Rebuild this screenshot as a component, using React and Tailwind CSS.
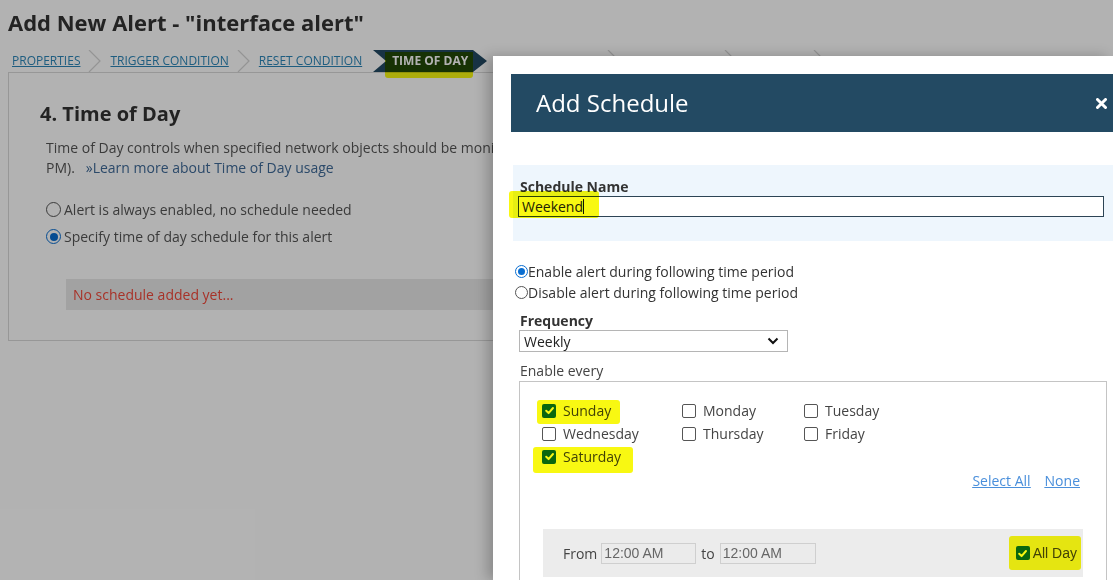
import React from 'react';

const Radio = ({ checked, size = 13 }) => (
  checked ? (
    <span className={`flex shrink-0 items-center justify-center rounded-full border-[1.5px] border-[#0a6ed1] bg-white ${size === 15 ? 'h-[15px] w-[15px]' : 'h-[13px] w-[13px]'}`}>
      <span className={`block rounded-full bg-[#0a6ed1] ${size === 15 ? 'h-[8px] w-[8px]' : 'h-[7px] w-[7px]'}`} />
    </span>
  ) : (
    <span className={`block shrink-0 rounded-full border border-[#555] bg-white ${size === 15 ? 'h-[15px] w-[15px]' : 'h-[13px] w-[13px]'}`} />
  )
);

const Check = ({ checked }) => (
  checked ? (
    <span className="flex h-[14px] w-[14px] shrink-0 items-center justify-center rounded-[2px] bg-[#0a6ad1]">
      <svg viewBox="0 0 12 12" className="h-[11px] w-[11px]">
        <path d="M2.4 6.3 L5 8.8 L9.8 3.3" fill="none" stroke="#fff" strokeWidth="2.2" strokeLinecap="round" strokeLinejoin="round" />
      </svg>
    </span>
  ) : (
    <span className="block h-[14px] w-[14px] shrink-0 rounded-[2px] border border-[#555] bg-white" />
  )
);

// yellow marker drawn over the screenshot
const Marker = ({ className }) => (
  <span className={`pointer-events-none absolute bg-[#f8f812] mix-blend-multiply ${className}`} />
);

const Chevron = () => (
  <svg width="14" height="22" viewBox="0 0 14 22" className="mx-[8px] shrink-0">
    <polyline points="1,0 12,11 1,22" fill="none" stroke="#d4d4d4" strokeWidth="1.2" />
  </svg>
);

const Crumb = ({ children }) => (
  <a className="whitespace-nowrap text-[12px] uppercase leading-[22px] text-[#2c86b8] underline">{children}</a>
);

const Day = ({ label, checked, marker }) => (
  <div className="relative flex h-[23px] items-center gap-[7px]">
    {marker}
    <Check checked={checked} />
    <span className="text-[14px] text-[#444]">{label}</span>
  </div>
);

export default function App() {
  return (
    <div className="relative h-[580px] w-[1113px] overflow-hidden bg-white font-['Open_Sans',sans-serif]">
      {/* page behind the dialog */}
      <div className="pl-[8px] pt-[7px]">
        <h1 className="text-[22px] font-bold leading-[30px] text-[#333]">Add New Alert - "interface alert"</h1>

        <nav className="mt-[13px] flex h-[22px] items-center pl-[4px]">
          <Crumb>Properties</Crumb>
          <Chevron />
          <Crumb>Trigger Condition</Crumb>
          <Chevron />
          <Crumb>Reset Condition</Crumb>
          <div className="relative ml-[11px] flex h-[22px] w-[114px] shrink-0 items-center pl-[19px]">
            <svg className="absolute inset-0" width="114" height="22" viewBox="0 0 114 22">
              <polygon points="0,0 100,0 114,11 100,22 0,22 13,11" fill="#234a63" />
            </svg>
            <Marker className="left-[12px] top-[2px] h-[26px] w-[88px] rounded-b-[3px]" />
            <span className="relative text-[12px] font-bold leading-[22px] text-white">TIME OF DAY</span>
          </div>
          <span className="ml-[10px]" />
          <Crumb>Trigger Actions</Crumb>
          <Chevron />
          <Crumb>Reset Actions</Crumb>
          <Chevron />
          <Crumb>Summary</Crumb>
          <Chevron />
        </nav>

        <section className="h-[269px] w-[1100px] border border-[#d8d8d8] pl-[31px] pt-[27px]">
          <h2 className="text-[20px] font-bold leading-[28px] text-[#333]">4. Time of Day</h2>
          <div className="ml-[6px] mt-[10px] text-[14px] leading-[20px] text-[#555]">
            <p className="whitespace-nowrap">
              Time of Day controls when specified network objects should be monitored for alert conditions (for example, from 8 AM to 5
              <br />
              PM).&nbsp;&nbsp; <a className="text-[#3f6a98]">»Learn more about Time of Day usage</a>
            </p>
            <div className="mt-[18px]">
              <label className="flex h-[27px] items-center gap-[3px]">
                <Radio size={15} />
                <span>Alert is always enabled, no schedule needed</span>
              </label>
              <label className="flex h-[27px] items-center gap-[3px]">
                <Radio size={15} checked />
                <span>Specify time of day schedule for this alert</span>
              </label>
            </div>
            <div className="ml-[20px] mt-[29px] flex h-[31px] items-center bg-[#e9e9e9] pl-[7px] text-[#f0483a]">
              No schedule added yet...
            </div>
          </div>
        </section>
      </div>

      {/* dim overlay */}
      <div className="absolute inset-0 bg-black/30" />

      {/* dialog */}
      <div className="absolute left-[493px] top-[56px] h-[524px] w-[620px] bg-white shadow-[-6px_0_12px_rgba(0,0,0,0.22)]">
        <div className="ml-[18px] mt-[18px] flex h-[58px] items-center justify-between bg-[#234a63] pl-[25px] pr-[6px]">
          <span className="text-[24px] leading-[32px] text-white">Add Schedule</span>
          <svg width="11" height="11" viewBox="0 0 11 11">
            <path d="M1.5 1.5 L9.5 9.5 M9.5 1.5 L1.5 9.5" stroke="#fff" strokeWidth="3" strokeLinecap="round" />
          </svg>
        </div>

        <div className="ml-[20px] mt-[33px] h-[76px] bg-[#eef6fd] pt-[12px]">
          <div className="pl-[7px] text-[14px] font-bold leading-[19px] text-[#333]">Schedule Name</div>
          <div className="relative ml-[5px] flex h-[21px] w-[586px] items-center border border-[#2d4455] bg-white pl-[3px]">
            <span className="text-[14px] leading-[19px] text-[#222]">Weekend</span>
            <span className="h-[15px] w-px bg-[#111]" />
            <Marker className="-left-[10px] -top-[6px] h-[27px] w-[90px] rounded-[3px]" />
          </div>
        </div>

        <div className="ml-[22px] mt-[20px] text-[14px] text-[#333]">
          <label className="flex h-[21px] items-center">
            <Radio checked />
            <span>Enable alert during following time period</span>
          </label>
          <label className="flex h-[21px] items-center">
            <Radio />
            <span>Disable alert during following time period</span>
          </label>
        </div>

        <div className="ml-[27px] mt-[9px] text-[14px] font-bold leading-[18px] text-[#333]">Frequency</div>
        <div className="ml-[26px] flex h-[22px] w-[269px] items-center justify-between border border-[#b5b5b5] pl-[4px] pr-[8px] text-[14px] text-[#222]">
          <span>Weekly</span>
          <svg width="12" height="8" viewBox="0 0 12 8">
            <path d="M1.5 1.5 L6 6 L10.5 1.5" fill="none" stroke="#111" strokeWidth="2" />
          </svg>
        </div>

        <div className="ml-[27px] mt-[9px] text-[14px] leading-[20px] text-[#444]">Enable every</div>
        <div className="ml-[26px] h-[220px] w-[588px] border border-[#c4c4c4] pt-[17px]">
          <div className="grid grid-cols-[140px_122px_auto] pl-[22px]">
            <Day label="Sunday" checked marker={<Marker className="-left-[5px] top-[1px] h-[24px] w-[83px] rounded-[3px]" />} />
            <Day label="Monday" />
            <Day label="Tuesday" />
            <Day label="Wednesday" />
            <Day label="Thursday" />
            <Day label="Friday" />
            <Day label="Saturday" checked marker={<Marker className="-left-[9px] top-[2px] h-[26px] w-[100px] rounded-[3px]" />} />
          </div>

          <div className="mt-[2px] flex h-[21px] items-center justify-end gap-[14px] pr-[26px] text-[14px] text-[#4a8fdb] underline">
            <a>Select All</a>
            <a>None</a>
          </div>

          <div className="ml-[23px] mr-[23px] mt-[38px] flex h-[48px] items-center bg-[#ececec] pl-[20px] pr-[6px] text-[14px] text-[#444]">
            <span>From</span>
            <span className="ml-[4px] flex h-[21px] w-[95px] items-center border border-[#cfcfcf] bg-[#ebebeb] pl-[2px] font-['Liberation_Sans',sans-serif] text-[#666]">12:00 AM</span>
            <span className="ml-[5px]">to</span>
            <span className="ml-[5px] flex h-[21px] w-[96px] items-center border border-[#cfcfcf] bg-[#ebebeb] pl-[2px] font-['Liberation_Sans',sans-serif] text-[#666]">12:00 AM</span>
            <div className="relative ml-auto flex items-center gap-[3px]">
              <Marker className="-left-[7px] -top-[7px] h-[34px] w-[72px] rounded-[3px]" />
              <Check checked />
              <span className="font-['Liberation_Sans',sans-serif] text-[#444]">All Day</span>
            </div>
          </div>
        </div>
      </div>
    </div>
  );
}
